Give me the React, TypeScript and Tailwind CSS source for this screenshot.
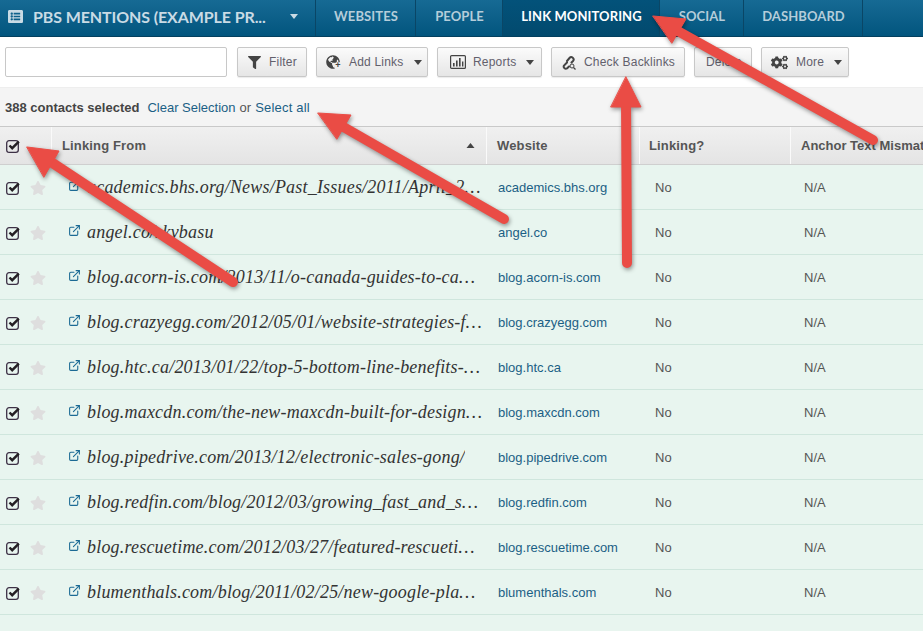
import { FaListAlt, FaFilter, FaGlobeAmericas, FaCogs, FaStar } from "react-icons/fa";
import { FiExternalLink } from "react-icons/fi";
import type { ReactNode } from "react";

const rows = [
  ["academics.bhs.org/News/Past_Issues/2011/April_2011/index.html", "academics.bhs.org"],
  ["angel.co/skvbasu", "angel.co"],
  ["blog.acorn-is.com/2013/11/o-canada-guides-to-canadian-business", "blog.acorn-is.com"],
  ["blog.crazyegg.com/2012/05/01/website-strategies-for-small-business", "blog.crazyegg.com"],
  ["blog.htc.ca/2013/01/22/top-5-bottom-line-benefits-of-the-cloud", "blog.htc.ca"],
  ["blog.maxcdn.com/the-new-maxcdn-built-for-design-and-developers", "blog.maxcdn.com"],
  ["blog.pipedrive.com/2013/12/electronic-sales-gong/", "blog.pipedrive.com"],
  ["blog.redfin.com/blog/2012/03/growing_fast_and_slowing_down.html", "blog.redfin.com"],
  ["blog.rescuetime.com/2012/03/27/featured-rescuetime-user-profile", "blog.rescuetime.com"],
  ["blumenthals.com/blog/2011/02/25/new-google-places-dashboard-data", "blumenthals.com"],
];

const tabs = [
  { label: "WEBSITES", width: "w-[100px]" },
  { label: "PEOPLE", width: "w-[87px]" },
  { label: "LINK MONITORING", width: "w-[157px]", active: true },
  { label: "SOCIAL", width: "w-[84px]" },
  { label: "DASHBOARD", width: "w-[119px]" },
];

function Caret({ up, className }: { up?: boolean; className: string }) {
  return (
    <svg viewBox="0 0 8 5" className={className} fill="currentColor">
      <polygon points={up ? "4,0 8,5 0,5" : "0,0 8,0 4,5"} />
    </svg>
  );
}

function ToolButton({ icon, label, caret, className }: { icon?: ReactNode; label: string; caret?: boolean; className: string }) {
  return (
    <button className={`flex h-[30px] items-center rounded-[2px] border border-[#c8c8c8] bg-gradient-to-b from-[#fbfbfb] to-[#e6e6e6] text-[12px] tracking-[0.2px] text-[#62606c] shadow-[0_1px_1px_rgba(0,0,0,0.08)] ${className}`}>
      {icon}
      <span>{label}</span>
      {caret && <Caret className="ml-[10px] h-[5px] w-[8px] text-[#444]" />}
    </button>
  );
}

function ReportsIcon() {
  return (
    <svg viewBox="0 0 16 14" className="mr-[7px] h-[14px] w-[16px] text-[#444]" fill="currentColor">
      <rect x="0.6" y="0.6" width="14.8" height="12.8" rx="1" fill="none" stroke="currentColor" strokeWidth="1.2" />
      <rect x="3" y="8" width="1.6" height="3.5" />
      <rect x="6" y="5.5" width="1.6" height="6" />
      <rect x="9" y="3" width="1.6" height="8.5" />
      <rect x="12" y="6.5" width="1.4" height="5" />
    </svg>
  );
}

function BacklinkIcon() {
  return (
    <svg viewBox="0 0 16 15" className="mr-[7px] h-[15px] w-[16px] text-[#444]" fill="none" stroke="currentColor">
      <path d="M6 7.5 L3 10.5 a2.2 2.2 0 0 0 3 3 L8 11.5" strokeWidth="2" strokeLinecap="round" />
      <path d="M6 6 L8.5 3 a2.3 2.3 0 0 1 3.5 3 L10.5 7.5" strokeWidth="2" strokeLinecap="round" />
      <circle cx="11" cy="11" r="2" strokeWidth="1" />
      <path d="M12.5 12.5 L14.5 14.5" strokeWidth="1.2" />
    </svg>
  );
}

function AddLinksIcon() {
  return (
    <span className="relative mr-[7px] block h-[15px] w-[16px]">
      <FaGlobeAmericas className="h-[14px] w-[14px] text-[#444]" />
      <span className="absolute bottom-0 right-0 flex h-[8px] w-[8px] items-center justify-center rounded-full bg-[#eee] text-[9px] font-bold leading-none text-[#444]">+</span>
    </span>
  );
}

function CheckBox() {
  return (
    <svg viewBox="0 0 16 14" className="block h-[14px] w-[16px]" fill="none">
      <rect x="0.7" y="1.7" width="11.6" height="11.6" rx="2.4" stroke="#3c3045" strokeWidth="1.3" />
      <path d="M3.5 6.5 L6.2 9.2 L12.8 2.6" stroke="#241f24" strokeWidth="2.4" />
    </svg>
  );
}

function Arrows() {
  return (
    <svg
      className="pointer-events-none absolute left-0 top-0 h-[631px] w-[923px] drop-shadow-[1px_2px_2px_rgba(0,0,0,0.4)]"
      viewBox="0 0 923 631"
    >
      <g fill="#ea4c45" stroke="#ea4c45" strokeLinecap="round">
        <line x1="873" y1="140" x2="676" y2="30" strokeWidth="10" />
        <polygon points="653,16 686,19 672,43" strokeWidth="1" />
        <line x1="627" y1="263" x2="626" y2="100" strokeWidth="10" />
        <polygon points="626,77 641,107 611,107" strokeWidth="1" />
        <line x1="504" y1="219" x2="340" y2="125" strokeWidth="10" />
        <polygon points="318,113 351,115 337,139" strokeWidth="1" />
        <line x1="233" y1="282" x2="48" y2="160" strokeWidth="10" />
        <polygon points="27,147 59,151 44,177" strokeWidth="1" />
      </g>
    </svg>
  );
}

export default function App() {
  return (
    <div className="relative h-[631px] w-[923px] overflow-hidden bg-white font-['Liberation_Sans',sans-serif]">
      {/* Top nav */}
      <nav className="flex h-[37px] border-b border-[#03405f] bg-gradient-to-b from-[#166a94] to-[#02557e] font-['Lato',sans-serif] text-[13px] font-bold tracking-[0.1px]">
        <div className="flex w-[316px] items-center border-r border-[#0a4666] pb-[3px] pl-[8px] text-[#c9dbe5]">
          <FaListAlt className="h-[15px] w-[15px]" />
          <span className="ml-[10px] text-[16px] tracking-[-0.1px]">PBS MENTIONS (EXAMPLE PR...</span>
          <Caret className="ml-[24px] h-[5px] w-[8px]" />
        </div>
        {tabs.map((t) => (
          <div
            key={t.label}
            className={`flex items-center justify-center border-r border-[#0a4666] pb-[2px] pl-[1px] ${t.width} ${
              t.active ? "bg-gradient-to-b from-[#03527a] to-[#024a6e] text-white" : "text-[#b5cdda]"
            }`}
          >
            {t.label}
          </div>
        ))}
      </nav>

      {/* Toolbar */}
      <div className="flex h-[51px] items-center gap-[9px] border-b border-[#eee] pl-[5px]">
        <input className="mr-[1px] h-[30px] w-[222px] rounded-[2px] border border-[#c8c8c8] bg-white" />
        <ToolButton className="w-[70px] pl-[10px]" icon={<FaFilter className="mr-[8px] h-[13px] w-[13px] text-[#444]" />} label="Filter" />
        <ToolButton className="w-[112px] pl-[9px]" icon={<AddLinksIcon />} label="Add Links" caret />
        <ToolButton className="w-[105px] pl-[12px]" icon={<ReportsIcon />} label="Reports" caret />
        <ToolButton className="w-[134px] pl-[9px]" icon={<BacklinkIcon />} label="Check Backlinks" />
        <ToolButton className="w-[58px] pl-[11px]" label="Delete" />
        <ToolButton className="w-[88px] pl-[9px]" icon={<FaCogs className="mr-[8px] h-[17px] w-[17px] text-[#444]" />} label="More" caret />
      </div>

      {/* Selection bar */}
      <div className="flex h-[39px] items-center border-b border-[#c9c9c9] bg-[#f4f4f4] pl-[5px] text-[13px] leading-none">
        <span className="font-bold text-[#444]">388 contacts selected</span>
        <span className="ml-[8px] text-[#1b5f85]">Clear Selection</span>
        <span className="ml-[4px] text-[#555]">or</span>
        <span className="ml-[4px] tracking-[0.2px] text-[#1b5f85]">Select all</span>
      </div>

      {/* Table head */}
      <div className="grid h-[38px] grid-cols-[52px_435px_153px_151px_1fr] border-b border-[#cfcfcf] bg-gradient-to-b from-[#f0f0f0] to-[#e4e4e4] text-[13px] font-bold tracking-[0.15px] text-[#555]">
        <div className="flex items-center border-r border-[#fafafa] pl-[6px]">
          <CheckBox />
        </div>
        <div className="flex items-center justify-between border-r border-[#fafafa] pl-[10px] pr-[11px]">
          <span>Linking From</span>
          <Caret up className="h-[5px] w-[9px] text-[#444]" />
        </div>
        <div className="flex items-center border-r border-[#fafafa] pl-[10px]">Website</div>
        <div className="flex items-center border-r border-[#fafafa] pl-[9px]">Linking?</div>
        <div className="flex items-center whitespace-nowrap pl-[10px] tracking-normal">Anchor Text Mismatch</div>
      </div>

      {/* Rows */}
      {rows.map(([url, site]) => (
        <div key={site} className="grid h-[45px] grid-cols-[52px_435px_153px_151px_1fr] items-center border-b border-[#cfe6dd] bg-[#e8f5ef] pt-[1px] text-[13px] text-[#555]">
          <div className="flex items-center pl-[6px]">
            <CheckBox />
            <FaStar className="ml-[8px] h-[16px] w-[16px] text-[#dedede]" />
          </div>
          <div className="flex items-center pl-[16px] pr-[5px]">
            <FiExternalLink className="mb-[5px] mr-[6px] h-[13px] w-[13px] shrink-0 text-[#1b6a94]" />
            <span className="truncate font-['Liberation_Serif',serif] text-[18px] italic tracking-[0.2px] text-[#333]">{url}</span>
          </div>
          <div className="pl-[11px] text-[#1b5f85]">{site}</div>
          <div className="pl-[15px]">No</div>
          <div className="pl-[13px]">N/A</div>
        </div>
      ))}
      <div className="h-[45px] bg-[#e8f5ef] pl-[30px] pt-[15px]">
        <FaStar className="h-[16px] w-[16px] text-[#dedede]" />
      </div>

      <Arrows />
    </div>
  );
}
